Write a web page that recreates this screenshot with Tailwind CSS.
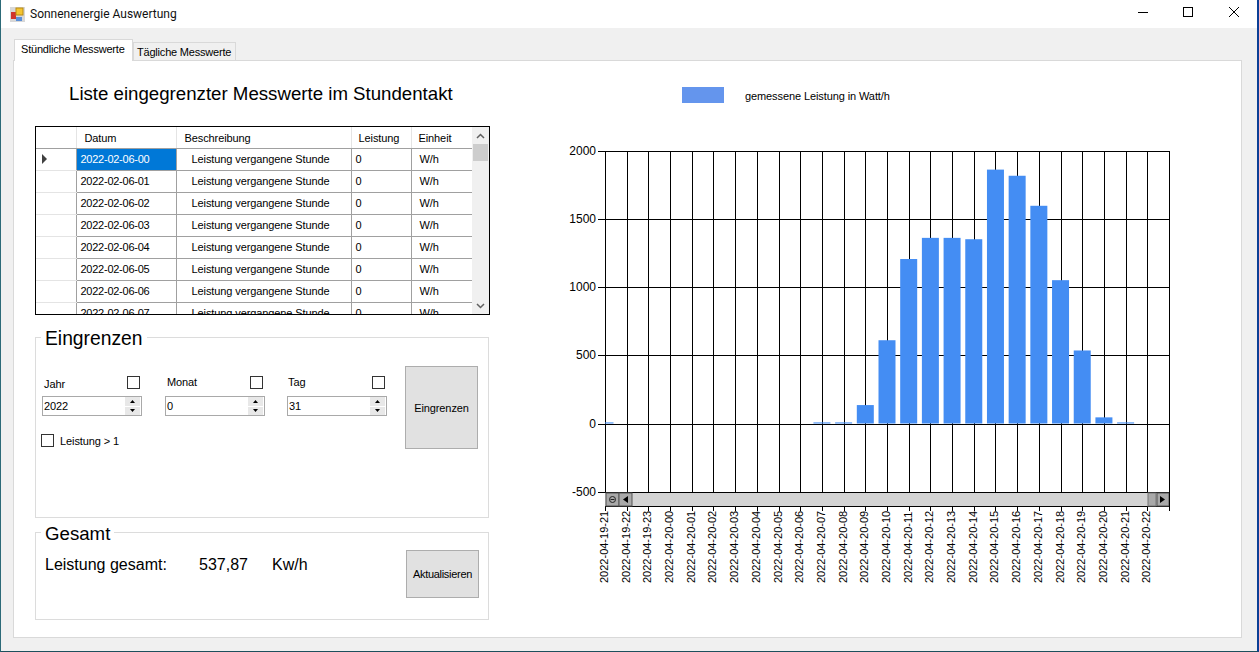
<!DOCTYPE html>
<html lang="de">
<head>
  <meta charset="UTF-8" />
  <title>Sonnenenergie Auswertung</title>
  <script src="https://cdn.jsdelivr.net/npm/@tailwindcss/browser@4"></script>
</head>
<body class="bg-[#0c3f96] overflow-hidden font-['Liberation_Sans',Arial,sans-serif] text-[11px] tracking-[-0.1px] text-black">

<div class="w-[1259px] h-[652px] flex flex-col bg-[#f0f0f0] border-l border-r-2 border-b border-l-[#2c6a78] border-r-[#0c3f96] border-b-[#1d4f5c]">

  <!-- Titelleiste -->
  <div class="h-[28px] shrink-0 bg-white flex items-center pl-[9px]">
    <svg width="15" height="15" viewBox="0 0 15 15" class="mr-[5px]">
      <rect x="0" y="0" width="15" height="15" fill="#d8d8d8"/>
      <rect x="1" y="5" width="5" height="7" fill="#d0342c"/>
      <rect x="6" y="1" width="7" height="7" fill="#f4c430" stroke="#b98a10"/>
      <rect x="6" y="10" width="6" height="4" fill="#5b8fd8"/>
    </svg>
    <span class="font-['Roboto',sans-serif] text-[12px] tracking-normal text-[#111]">Sonnenenergie Auswertung</span>
    <div class="ml-auto flex items-center mr-[-3px]">
      <svg width="46" height="28" viewBox="0 0 46 28"><path d="M15 12.5h10" stroke="#000"/></svg>
      <svg width="46" height="28" viewBox="0 0 46 28"><rect x="14.5" y="7.5" width="9" height="9" fill="none" stroke="#000"/></svg>
      <svg width="46" height="28" viewBox="0 0 46 28" class="mr-[-1px]"><path d="M14 7l10 10M24 7L14 17" stroke="#000" fill="none"/></svg>
    </div>
  </div>

  <!-- Reiter -->
  <div class="flex items-end h-[32px] shrink-0 pl-[13px] relative z-10 whitespace-nowrap tracking-[-0.2px]">
    <div class="h-[22px] w-[119px] bg-white border border-b-0 border-[#d9d9d9] pl-[6px] pt-[1px] mb-[-1px]">Stündliche Messwerte</div>
    <div class="h-[19px] w-[103px] bg-[#f0f0f0] border border-[#d9d9d9] pl-[3px] pt-[1px] mb-[-1px]">Tägliche Messwerte</div>
  </div>

  <!-- Inhalt -->
  <div class="w-[1229px] h-[578px] ml-[12px] bg-white border border-[#d9d9d9] flex">

    <!-- linke Spalte -->
    <div class="w-[477px] shrink-0 pl-[21px]">
      <h1 class="text-[18.67px] leading-[21px] tracking-normal ml-[34px] mt-[22px] whitespace-nowrap">Liste eingegrenzter Messwerte im Stundentakt</h1>

      <!-- Tabelle -->
      <div class="mt-[22px] w-[455px] h-[189px] border border-black flex overflow-hidden">
        <div class="w-[436px] h-full overflow-hidden">
          <table class="table-fixed w-[436px] border-collapse">
            <colgroup>
              <col class="w-[40px]"/><col class="w-[100px]"/><col class="w-[175px]"/><col class="w-[60px]"/><col class="w-[61px]"/>
            </colgroup>
            <thead>
              <tr class="h-[21px] text-left">
                <th class="font-normal border-r border-b border-r-[#e4e4e4] border-b-[#a0a0a0]"></th>
                <th class="font-normal border-r border-b border-r-[#e4e4e4] border-b-[#a0a0a0] pl-[8px] pt-[1px]">Datum</th>
                <th class="font-normal border-r border-b border-r-[#e4e4e4] border-b-[#a0a0a0] pl-[8px] pt-[1px]">Beschreibung</th>
                <th class="font-normal border-r border-b border-r-[#e4e4e4] border-b-[#a0a0a0] pl-[7px] pt-[1px]">Leistung</th>
                <th class="font-normal border-b border-b-[#a0a0a0] pl-[7px] pt-[1px]">Einheit</th>
              </tr>
            </thead>
            <tbody id="rows"></tbody>
          </table>
        </div>
        <!-- Scrollbar -->
        <div class="w-[17px] h-full bg-[#f0f0f0] flex flex-col relative">
          <div class="h-[17px] flex items-center justify-center">
            <svg width="9" height="6" viewBox="0 0 9 6"><path d="M1 5l3.5-3.5L8 5" fill="none" stroke="#606060" stroke-width="1.5"/></svg>
          </div>
          <div class="h-[17px] mx-[1px] bg-[#cdcdcd]"></div>
          <div class="mt-auto h-[17px] flex items-center justify-center">
            <svg width="9" height="6" viewBox="0 0 9 6"><path d="M1 1l3.5 3.5L8 1" fill="none" stroke="#606060" stroke-width="1.5"/></svg>
          </div>
        </div>
      </div>

      <!-- Eingrenzen -->
      <fieldset class="mt-[11px] w-[454px] h-[192px] border border-[#dcdcdc] relative">
        <legend class="ml-[5px] px-1 pt-[2px] text-[19.3px] leading-[21px] tracking-normal">Eingrenzen</legend>
        <div class="flex items-start pl-[6px] pt-[27px]">
          <div class="w-[100px]">
            <div class="flex justify-between items-start pl-[2px] pr-[2px] h-[20px]">
              <span>Jahr</span>
              <span class="w-[13px] h-[13px] border border-[#333] bg-white"></span>
            </div>
            <div class="h-[20px] border border-[#a9a9a9] flex items-center pl-[1px] tracking-[-0.15px]">
              <span>2022</span>
              <div class="ml-auto w-[15px] h-[18px] flex flex-col gap-[1px] mr-[1px]">
                <div class="flex-1 bg-[#e8e8e8] flex items-center justify-center"><svg width="5" height="3" viewBox="0 0 5 3"><path d="M2.5 0L5 3H0z" fill="#000"/></svg></div>
                <div class="flex-1 bg-[#e8e8e8] flex items-center justify-center"><svg width="5" height="3" viewBox="0 0 5 3"><path d="M2.5 3L5 0H0z" fill="#000"/></svg></div>
              </div>
            </div>
          </div>
          <div class="w-[100px] ml-[23px]">
            <div class="flex justify-between items-start pl-[2px] pr-[2px] h-[20px]">
              <span class="mt-[-2px]">Monat</span>
              <span class="w-[13px] h-[13px] border border-[#333] bg-white"></span>
            </div>
            <div class="h-[20px] border border-[#a9a9a9] flex items-center pl-[1px]">
              <span>0</span>
              <div class="ml-auto w-[15px] h-[18px] flex flex-col gap-[1px] mr-[1px]">
                <div class="flex-1 bg-[#e8e8e8] flex items-center justify-center"><svg width="5" height="3" viewBox="0 0 5 3"><path d="M2.5 0L5 3H0z" fill="#000"/></svg></div>
                <div class="flex-1 bg-[#e8e8e8] flex items-center justify-center"><svg width="5" height="3" viewBox="0 0 5 3"><path d="M2.5 3L5 0H0z" fill="#000"/></svg></div>
              </div>
            </div>
          </div>
          <div class="w-[100px] ml-[22px]">
            <div class="flex justify-between items-start pl-[1px] pr-[2px] h-[20px]">
              <span class="mt-[-2px]">Tag</span>
              <span class="w-[13px] h-[13px] border border-[#333] bg-white"></span>
            </div>
            <div class="h-[20px] border border-[#a9a9a9] flex items-center pl-[1px]">
              <span>31</span>
              <div class="ml-auto w-[15px] h-[18px] flex flex-col gap-[1px] mr-[1px]">
                <div class="flex-1 bg-[#e8e8e8] flex items-center justify-center"><svg width="5" height="3" viewBox="0 0 5 3"><path d="M2.5 0L5 3H0z" fill="#000"/></svg></div>
                <div class="flex-1 bg-[#e8e8e8] flex items-center justify-center"><svg width="5" height="3" viewBox="0 0 5 3"><path d="M2.5 3L5 0H0z" fill="#000"/></svg></div>
              </div>
            </div>
          </div>
          <button class="ml-[18px] mt-[-10px] w-[73px] h-[83px] pt-[2px] bg-[#e1e1e1] border border-[#adadad]">Eingrenzen</button>
        </div>
        <div class="flex items-center pl-[5px] mt-[-17px]">
          <span class="w-[13px] h-[13px] border border-[#333] bg-white"></span>
          <span class="ml-[6px] mt-[1px]">Leistung &gt; 1</span>
        </div>
      </fieldset>

      <!-- Gesamt -->
      <fieldset class="mt-[3px] w-[454px] h-[99px] border border-[#dcdcdc]">
        <legend class="ml-[5px] px-1 pt-[2px] text-[18.67px] leading-[21px] tracking-normal">Gesamt</legend>
        <div class="flex items-start pl-[9px]">
          <div class="flex text-[16px] leading-[18px] tracking-normal mt-[12px]">
            <span class="w-[154px]">Leistung gesamt:</span>
            <span class="w-[73px]">537,87</span>
            <span>Kw/h</span>
          </div>
          <button class="ml-auto mr-[9px] mt-[6px] w-[73px] h-[48px] bg-[#e1e1e1] border border-[#adadad] tracking-[-0.3px]">Aktualisieren</button>
        </div>
      </fieldset>
    </div>

    <!-- rechte Spalte: Diagramm -->
    <div class="flex-1 min-w-0">
      <div class="flex items-center ml-[191px] mt-[26px] h-[16px]">
        <span class="w-[42px] h-[16px] bg-[#6495ed]"></span>
        <span class="ml-[21px] mt-[2px]">gemessene Leistung in Watt/h</span>
      </div>
      <svg id="chart" width="640" height="470" viewBox="560 130 640 470" class="block ml-[69px] mt-[27px] text-[11px] tracking-normal"></svg>
    </div>
  </div>
</div>

<script>
  // Tabelle
  let rows = "";
  for (let i = 0; i < 8; i++) {
    const hour = String(i).padStart(2, "0");
    const sel = i === 0;
    rows += `<tr class="h-[22px]">
      <td class="border-r border-b border-r-[#a0a0a0] border-b-[#e4e4e4] pl-[6px]">${sel ? '<svg width="6" height="10" viewBox="0 0 6 10"><path d="M0 0l5 5-5 5z" fill="#404040"/></svg>' : ""}</td>
      <td class="border-r border-b border-[#a0a0a0] pl-[4px] tracking-[-0.25px] ${sel ? "bg-[#0078d7] text-white" : ""}">2022-02-06-${hour}</td>
      <td class="border-r border-b border-[#a0a0a0] pl-[15px] whitespace-nowrap">Leistung vergangene Stunde</td>
      <td class="border-r border-b border-[#a0a0a0] pl-[4px]">0</td>
      <td class="border-b border-[#a0a0a0] pl-[8px]">W/h</td>
    </tr>`;
  }
  document.getElementById("rows").innerHTML = rows;

  // Diagramm, Koordinaten entsprechen den Seitenpixeln
  const x0 = 605, step = 564 / 26;
  const y = v => 423.5 - v * 0.1365;
  const bars = [8,0,0,0,0,0,0,0,0,0,8,8,135,610,1205,1360,1360,1350,1860,1815,1595,1050,535,45,8,0];
  const labels = [];
  for (let i = 21; i < 24; i++) labels.push("2022-04-19-" + i);
  for (let i = 0; i < 23; i++) labels.push("2022-04-20-" + String(i).padStart(2, "0"));

  let s = "";
  for (let i = 0; i <= 26; i++) {
    const x = Math.round(x0 + i * step) + 0.5;
    s += `<path d="M${x} 151V492" stroke="#000" shape-rendering="crispEdges"/>`;
    s += `<path d="M${x} 506V511" stroke="#000" shape-rendering="crispEdges"/>`;
  }
  [2000, 1500, 1000, 500, 0, -500].forEach(v => {
    const yy = Math.round(y(v)) + 0.5;
    s += `<path d="M598 ${yy}H1170" stroke="#000" shape-rendering="crispEdges"/>`;
    s += `<text x="596" y="${yy + 3}" text-anchor="end" font-size="12">${v}</text>`;
  });
  bars.forEach((v, i) => {
    if (!v) return;
    const x = x0 + i * step;
    const left = Math.max(x - 8.5, x0);
    s += `<rect x="${left}" y="${y(v)}" width="${x + 8.5 - left}" height="${423.5 - y(v)}" fill="#448df3"/>`;
  });
  labels.forEach((t, i) => {
    const x = Math.round(x0 + i * step) + 3;
    s += `<text transform="rotate(-90 ${x} 583)" x="${x}" y="583" font-size="11">${t}</text>`;
  });
  // Scrollbar des Diagramms
  s += `<rect x="605" y="492" width="565" height="15" fill="#d3d3d3"/>
    <path d="M605 492.5H1170M605 506.5H1170" stroke="#000" shape-rendering="crispEdges"/>
    <rect x="606" y="493" width="13" height="13" fill="#a9a9a9" stroke="#555"/>
    <circle cx="612.5" cy="499.5" r="3" fill="none" stroke="#222"/><path d="M610.5 499.5h4" stroke="#222"/>
    <rect x="619" y="493" width="13" height="13" fill="#a9a9a9" stroke="#555"/>
    <path d="M628 496v7l-5-3.5z" fill="#000"/>
    <rect x="1148" y="493" width="8" height="13" fill="#a9a9a9" stroke="#777"/>
    <rect x="1157" y="493" width="12" height="13" fill="#a9a9a9" stroke="#555"/>
    <path d="M1160 496v7l5-3.5z" fill="#000"/>
    <path d="M1169.5 151V511" stroke="#000" shape-rendering="crispEdges"/>`;
  document.getElementById("chart").innerHTML = s;
</script>
</body>
</html>
